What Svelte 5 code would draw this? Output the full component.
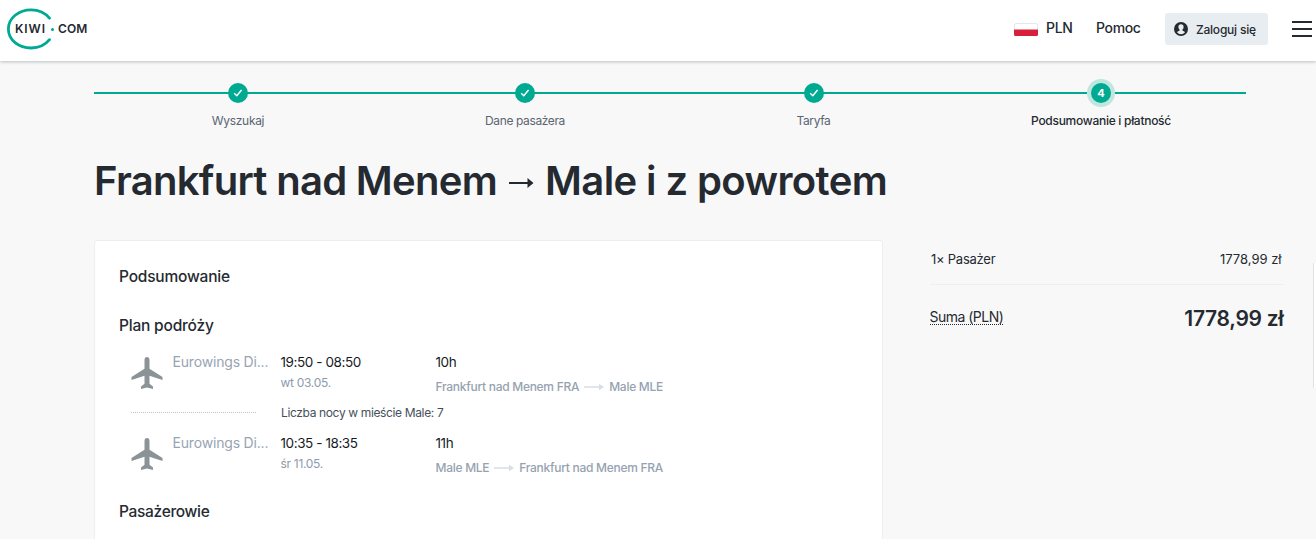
<script>
  const steps = ["Wyszukaj", "Dane pasażera", "Taryfa", "Podsumowanie i płatność"];
  const current = 3;

  const flights = [
    {
      carrier: "Eurowings Di...",
      time: "19:50 - 08:50",
      date: "wt 03.05.",
      duration: "10h",
      from: "Frankfurt nad Menem FRA",
      to: "Male MLE",
      nights: "Liczba nocy w mieście Male: 7",
    },
    {
      carrier: "Eurowings Di...",
      time: "10:35 - 18:35",
      date: "śr 11.05.",
      duration: "11h",
      from: "Male MLE",
      to: "Frankfurt nad Menem FRA",
    },
  ];
</script>

<header>
  <div class="logo">
    <svg class="ring" width="46" height="42" viewBox="0 0 46 42">
      <path d="M42.500 10.200C38.300 5 31.500 1.800 24.200 1.800 11.700 1.800 1.400 10 1.400 21s10.300 19 22.800 19C31.500 40 38.300 36.900 42.500 31.700" />
    </svg>
    <span class="kiwi">KIWI</span>
    <i class="dot"></i>
    <span class="com">COM</span>
  </div>
  <nav>
    <svg class="flag" width="24" height="13" viewBox="0 0 24 13">
      <rect x="0.500" y="0.500" width="23" height="12" rx="1.500" fill="#fff" stroke="#e4e8ea" />
      <path d="M0 6.500h24v5a1.500 1.500 0 0 1-1.500 1.500h-21A1.500 1.500 0 0 1 0 11.500z" fill="#d7213c" />
    </svg>
    <span class="pln">PLN</span>
    <span class="help">Pomoc</span>
    <button class="login">
      <svg width="14" height="14" viewBox="0 0 14 14">
        <circle cx="7" cy="7" r="7" fill="#252a31" />
        <path d="M7 2.300c1.700 0 2.600 1.100 2.600 2.700 0 1.200-.5 2-1.100 2.600v1.100c.9.400 2.100.7 2.500 1.600C10 11.500 8.600 12.200 7 12.200s-3-.7-4-1.900c.4-.9 1.600-1.200 2.500-1.600V7.600C4.900 7 4.400 6.200 4.400 5 4.400 3.400 5.300 2.300 7 2.300z" fill="#e8edf1" />
      </svg>
      <span>Zaloguj się</span>
    </button>
    <span class="burger"><i></i><i></i><i></i></span>
  </nav>
</header>

<main>
  <div class="steps">
    {#each steps as step, i}
      <div class="step" class:current={i === current}>
        <div class="track">
          <span class="bullet">
            {#if i < current}
              <svg width="10" height="8" viewBox="0 0 10 8"><path d="M1.200 4.200 3.800 6.700 8.600 1" /></svg>
            {:else}
              {i + 1}
            {/if}
          </span>
        </div>
        <div class="label">{step}</div>
      </div>
    {/each}
  </div>

  <h1>
    <span class="origin">Frankfurt nad Menem</span>
    <svg width="26" height="12" viewBox="0 0 26 12">
      <path d="M0 5h18.500V1l6 5-6 5V7H0z" fill="#252a31" />
    </svg>
    <span class="destination">Male i z powrotem</span>
  </h1>

  <div class="columns">
    <section class="card">
      <h2 class="summary">Podsumowanie</h2>
      <h2 class="plan">Plan podróży</h2>
      {#each flights as flight}
        <div class="flight">
          <svg class="plane" width="32" height="33" viewBox="0 0 32 33">
            <path d="M16 0c1.500 0 2.500 1.300 2.500 3v8.800L31.500 20v2.900l-13-4.200v8.100l3.500 2.700V32l-6-1.400L10 32v-2.500l3.500-2.700v-8.100l-13 4.200V20l13-8.200V3c0-1.700 1-3 2.500-3z" />
          </svg>
          <div class="carrier">{flight.carrier}</div>
          <div class="when">
            <div class="time">{flight.time}</div>
            <div class="date">{flight.date}</div>
          </div>
          <div class="where">
            <div class="duration">{flight.duration}</div>
            <div class="route">
              <span>{flight.from}</span>
              <svg width="20" height="8" viewBox="0 0 20 8">
                <path d="M0 3.200h15V.8L20 4l-5 3.200V4.800H0z" fill="#d6dee8" />
              </svg>
              <span>{flight.to}</span>
            </div>
          </div>
        </div>
        {#if flight.nights}
          <div class="stay">
            <span class="dots"></span>
            <span class="nights">{flight.nights}</span>
          </div>
        {/if}
      {/each}
      <h2 class="passengers">Pasażerowie</h2>
    </section>

    <aside>
      <div class="item">
        <span class="who">1× Pasażer</span>
        <span class="price">1778,99 zł</span>
      </div>
      <div class="total">
        <span class="sum">Suma (PLN)</span>
        <strong>1778,99 zł</strong>
      </div>
    </aside>
  </div>
</main>

<div class="side-tab"></div>

<style>
  :global(body) {
    background: #f8f8f8;
    overflow: hidden;
    font-family: Inter, "Liberation Sans", sans-serif;
    color: #252a31;
  }
  header {
    height: 61px;
    box-sizing: border-box;
    padding: 0 4px 3px 7px;
    display: flex;
    align-items: center;
    justify-content: space-between;
    background: #fff;
    box-shadow: 0 1px 3px rgba(37, 42, 49, 0.28);
  }
  .logo {
    display: flex;
    align-items: center;
    font-size: 12px;
    font-weight: 600;
  }
  .ring {
    margin-right: -38px;
    fill: none;
    stroke: #00a991;
    stroke-width: 2.8;
    stroke-linecap: round;
  }
  .dot {
    width: 3px;
    height: 3px;
    margin: 0 4px 0 4px;
    border-radius: 50%;
    background: #00a991;
  }
  .kiwi {
    width: 32px;
    padding-bottom: 1px;
    letter-spacing: 0.9px;
  }
  .com {
    padding-bottom: 1px;
    letter-spacing: 0.15px;
  }
  nav {
    display: flex;
    align-items: center;
    font-size: 14px;
    font-weight: 500;
  }
  .flag {
    margin: 1px 8px 0 0;
  }
  .pln,
  .help {
    padding-bottom: 3px;
    letter-spacing: -0.35px;
  }
  .pln {
    width: 50px;
  }
  .help {
    width: 69px;
  }
  .login {
    display: flex;
    align-items: center;
    gap: 8px;
    width: 103px;
    height: 32px;
    padding: 0 0 0 9px;
    border: 0;
    border-radius: 3px;
    background: #e8edf1;
    color: #252a31;
    font: 500 12px Inter, sans-serif;
    letter-spacing: -0.22px;
    white-space: nowrap;
  }
  .burger {
    display: flex;
    flex-direction: column;
    gap: 5px;
    width: 20px;
    margin-left: 24px;
  }
  .burger i {
    height: 2px;
    background: #252a31;
  }
  main {
    padding-left: 94px;
  }
  .steps {
    display: grid;
    grid-template-columns: 288px 286px 292px 286px;
    padding-top: 22px;
    text-align: center;
  }
  .track {
    display: flex;
    justify-content: center;
    background: linear-gradient(#00a991, #00a991) center / 100% 2px no-repeat;
  }
  .bullet {
    display: flex;
    align-items: center;
    justify-content: center;
    width: 20px;
    height: 20px;
    border-radius: 50%;
    background: #00a991;
    color: #fff;
    font-size: 11px;
    font-weight: 700;
  }
  .current .bullet,
  .current .label {
    margin-right: 4px;
  }
  .bullet path {
    fill: none;
    stroke: #fff;
    stroke-width: 1.5;
  }
  .current .bullet {
    box-shadow: 0 0 0 4px #bfe6df;
  }
  .label {
    margin-top: 8px;
    font-size: 12px;
    line-height: 20px;
    letter-spacing: -0.38px;
    color: #5b6572;
  }
  .step:first-child .label {
    letter-spacing: -0.3px;
  }
  .step:nth-child(3) .label {
    margin-right: 1px;
  }
  .current .label {
    color: #252a31;
    font-weight: 500;
    letter-spacing: -0.28px;
  }
  h1 {
    display: flex;
    align-items: center;
    margin: 24px 0 0;
    height: 50px;
    font-size: 40px;
    font-weight: 600;
    letter-spacing: -0.7px;
    white-space: nowrap;
  }
  h1 svg {
    margin: 6px 10px 0 12px;
  }
  .destination {
    letter-spacing: -0.6px;
  }
  .columns {
    display: flex;
    margin-top: 35px;
  }
  .card {
    width: 789px;
    height: 320px;
    box-sizing: border-box;
    padding: 26px 24px 0;
    border: 1px solid #eceef0;
    border-radius: 3px;
    background: #fff;
  }
  h2 {
    margin: 0;
    font-size: 15.5px;
    font-weight: 500;
    line-height: 20px;
    letter-spacing: -0.2px;
  }
  .plan {
    margin: 29px 0 16px;
  }
  .flight {
    display: grid;
    grid-template-columns: 42px 108px 155px auto;
    height: 51px;
    padding-left: 11.5px;
    line-height: 20px;
  }
  .plane {
    margin: 5px 0 0 0.5px;
    fill: #8c9396;
  }
  .carrier {
    font-size: 14px;
    letter-spacing: -0.18px;
    color: #98a4b3;
  }
  .time,
  .duration {
    font-size: 13.5px;
    letter-spacing: -0.42px;
    color: #171b1e;
  }
  .date {
    margin-top: 1px;
    font-size: 12px;
    letter-spacing: -0.3px;
    color: #8c9aad;
  }
  .route {
    display: flex;
    align-items: center;
    gap: 5px;
    margin-top: 5px;
    font-size: 12px;
    font-weight: 500;
    letter-spacing: -0.28px;
    color: #96a2b1;
  }
  .stay {
    display: flex;
    align-items: center;
    height: 20px;
    margin-bottom: 10px;
    padding-left: 12px;
    font-size: 12px;
    letter-spacing: -0.36px;
    color: #46505c;
  }
  .dots {
    width: 125px;
    margin: -2px 25px 0 0;
    border-top: 1px dotted #bfc3c7;
  }
  .nights {
    padding-bottom: 1px;
  }
  .passengers {
    margin-top: 18px;
    letter-spacing: -0.32px;
  }
  aside {
    width: 354px;
    margin-left: 46.5px;
  }
  .item,
  .total {
    display: flex;
    align-items: center;
    justify-content: space-between;
  }
  .item {
    height: 38px;
    padding: 0 2px 6px 1.5px;
    border-bottom: 1px solid #eeeff0;
    font-size: 13px;
  }
  .who {
    letter-spacing: -0.25px;
  }
  .total {
    height: 66px;
  }
  .sum {
    margin-top: -2px;
    font-size: 14px;
    line-height: 15px;
    letter-spacing: -0.52px;
    border-bottom: 1px dotted #252a31;
  }
  strong {
    font-size: 21px;
    font-weight: 600;
    letter-spacing: -0.3px;
  }
  .side-tab {
    position: absolute;
    right: 0;
    top: 263px;
    width: 2px;
    height: 125px;
    background: #fff;
    border-left: 1px solid #dfe1e3;
  }
</style>
